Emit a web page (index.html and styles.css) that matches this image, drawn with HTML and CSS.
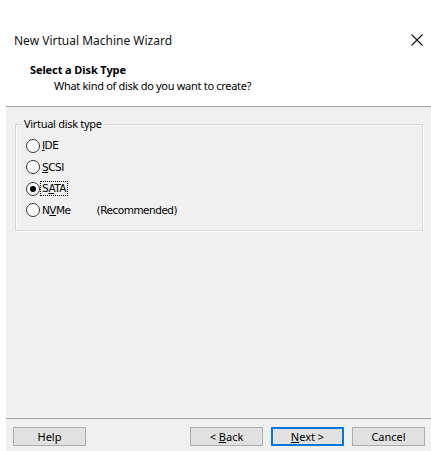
FILE: index.html
```html
<!DOCTYPE html>
<html>
<head>
<meta charset="utf-8">
<link rel="stylesheet" href="styles.css">
</head>
<body>
<div class="dialog">
  <div class="titlebar">
    <span class="title">New Virtual Machine Wizard</span>
    <svg class="close" width="12" height="12" viewBox="0 0 12 12"><path d="M0.5 0.5 L11.5 11.5 M11.5 0.5 L0.5 11.5" stroke="#111" stroke-width="1.1" fill="none"/></svg>
  </div>
  <div class="header">
    <div class="h-title">Select a Disk Type</div>
    <div class="h-sub">What kind of disk do you want to create?</div>
  </div>
  <div class="sep"></div>
  <div class="content">
    <div class="group">
      <div class="legend">Virtual disk type</div>
      <div class="radios">
        <div class="radio"><span class="circle"></span><span class="lbl"><u>I</u>DE</span></div>
        <div class="radio"><span class="circle"></span><span class="lbl"><u>S</u>CSI</span></div>
        <div class="radio"><span class="circle checked"></span><span class="lbl focus">S<u>A</u>TA</span></div>
        <div class="radio"><span class="circle"></span><span class="lbl nv">N<u>V</u>Me</span><span class="rec">(Recommended)</span></div>
      </div>
    </div>
  </div>
  <div class="footer">
    <button class="btn">Help</button>
    <div class="spacer"></div>
    <button class="btn">&lt; <u>B</u>ack</button>
    <button class="btn default"><u>N</u>ext &gt;</button>
    <button class="btn">Cancel</button>
  </div>
</div>
</body>
</html>
```
FILE: styles.css
```css
html, body {
  margin: 0;
  padding: 0;
  background: #ffffff;
}
.dialog {
  width: 431px;
  height: 451px;
  display: flex;
  flex-direction: column;
  font-family: "Noto Sans", "Open Sans", sans-serif;
  color: #000;
}
.titlebar {
  height: 60px;
  display: flex;
  align-items: center;
  justify-content: space-between;
  padding: 20px 8px 0 14px;
  box-sizing: border-box;
}
.title {
  font-size: 12px;
  color: #111;
}
.close {
  display: block;
}
.header {
  height: 46px;
  box-sizing: border-box;
  padding: 2px 0 0 30px;
}
.h-title {
  font-weight: bold;
  font-size: 11px;
  line-height: 16px;
  letter-spacing: -0.1px;
}
.h-sub {
  padding-left: 24px;
  font-size: 11px;
  line-height: 15px;
  letter-spacing: -0.3px;
}
.sep {
  height: 1px;
  background: #a0a0a0;
  margin-left: 6px;
}
.content {
  margin-left: 6px;
  height: 311px;
  background: #f0f0f0;
  padding: 17px 8px 0 9px;
  box-sizing: border-box;
}
.group {
  position: relative;
  height: 107px;
  border: 1px solid #d5d5d5;
  box-shadow: inset 1px 1px 0 #ffffff, 1px 1px 0 #ffffff;
  box-sizing: border-box;
}
.legend {
  position: absolute;
  top: -8px;
  left: 6px;
  padding: 0 2px;
  background: #f0f0f0;
  font-size: 11px;
  letter-spacing: -0.3px;
  line-height: 14px;
}
.radios {
  padding: 14px 0 0 10px;
  display: flex;
  flex-direction: column;
  gap: 8.5px;
}
.radio {
  display: flex;
  align-items: center;
  height: 13px;
  font-family: "DejaVu Sans", sans-serif;
  font-size: 10.5px;
  letter-spacing: -0.5px;
}
.circle {
  width: 12px;
  height: 12px;
  border: 1px solid #333;
  border-radius: 50%;
  background: #fff;
  position: relative;
  flex: none;
}
.circle.checked::after {
  content: "";
  position: absolute;
  left: 3px;
  top: 3px;
  width: 6px;
  height: 6px;
  border-radius: 50%;
  background: #000;
}
.lbl {
  margin-left: 1px;
  line-height: 13px;
  padding: 0 1px;
}
.lbl.focus {
  outline: 1px dotted #000;
}
.rec {
  margin-left: 25px;
}
.footer {
  flex: 1;
  background: #f0f0f0;
  border-top: 1px solid #a0a0a0;
  margin-left: 6px;
  display: flex;
  align-items: center;
  padding: 3px 6px 0 7px;
  gap: 8px;
}
.spacer {
  flex: 1;
}
.btn {
  width: 73px;
  height: 19px;
  box-sizing: border-box;
  background: #e1e1e1;
  border: 1px solid #adadad;
  font-family: "Noto Sans", "Open Sans", sans-serif;
  font-size: 11px;
  padding: 0;
  color: #000;
  line-height: 16px;
}
.btn.default {
  border: 2px solid #0078d7;
}
```
